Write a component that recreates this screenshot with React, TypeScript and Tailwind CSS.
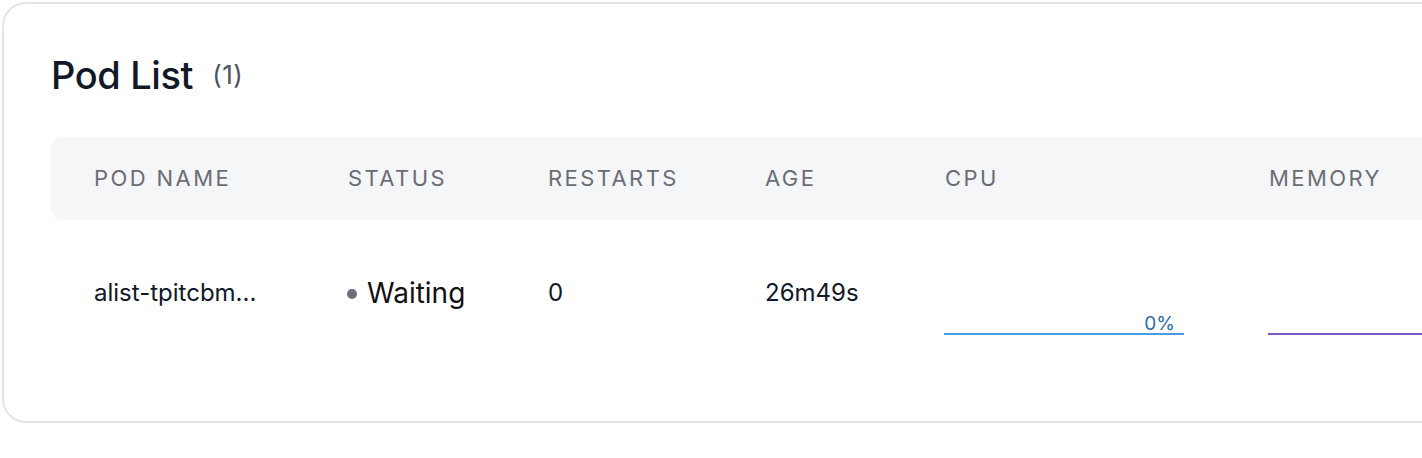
const COLS = 'grid grid-cols-[254px_200px_217px_180px_324px_1fr]'

const HEADERS = ['POD NAME', 'STATUS', 'RESTARTS', 'AGE', 'CPU', 'MEMORY']

function UsageBar({ color, label }: { color: string; label?: string }) {
  return (
    <div className={`mt-[36px] h-[24px] w-[240px] border-b-2 ${color} flex items-end justify-end pr-[9px]`}>
      {label && <span className="text-[19px] leading-[18px] text-[#2f6ba3]">{label}</span>}
    </div>
  )
}

export default function App() {
  return (
    <div className="min-h-screen bg-white overflow-hidden font-['Inter',sans-serif] pt-[2px] pl-[2px]">
      <div className="w-[1500px] h-[421px] rounded-[24px] border-2 border-[#e4e4e4] bg-white pt-[48px] pl-[47px]">
        <div className="flex items-center gap-[19px]">
          <h2 className="text-[38px] leading-[46px] font-medium text-[#111827] tracking-[-0.01em]">Pod List</h2>
          <span className="text-[26px] leading-[30px] text-[#4b5563] tracking-[0.02em]">(1)</span>
        </div>

        <div className={`${COLS} mt-[39px] h-[83px] items-center rounded-xl bg-[#f5f6f8] pl-[43px]`}>
          {HEADERS.map((h) => (
            <div key={h} className="text-[22px] tracking-[0.11em] text-[#6b6d76]">{h}</div>
          ))}
        </div>

        <div className={`${COLS} pt-[55px] pl-[43px] text-[#111827] leading-[36px]`}>
          <div className="text-[24px]">alist-tpitcbm...</div>
          <div className="flex items-start -ml-[1px]">
            <span className="mt-[14px] mr-[10px] h-[10px] w-[10px] shrink-0 rounded-full bg-[#6b6f80]" />
            <span className="text-[28px] text-[#111]">Waiting</span>
          </div>
          <div className="text-[24px]">0</div>
          <div className="text-[24px]">26m49s</div>
          <div className="-ml-[1px]"><UsageBar color="border-[#4a9be0]" label="0%" /></div>
          <div className="-ml-[1px]"><UsageBar color="border-[#7a5cc4]" /></div>
        </div>
      </div>
    </div>
  )
}
